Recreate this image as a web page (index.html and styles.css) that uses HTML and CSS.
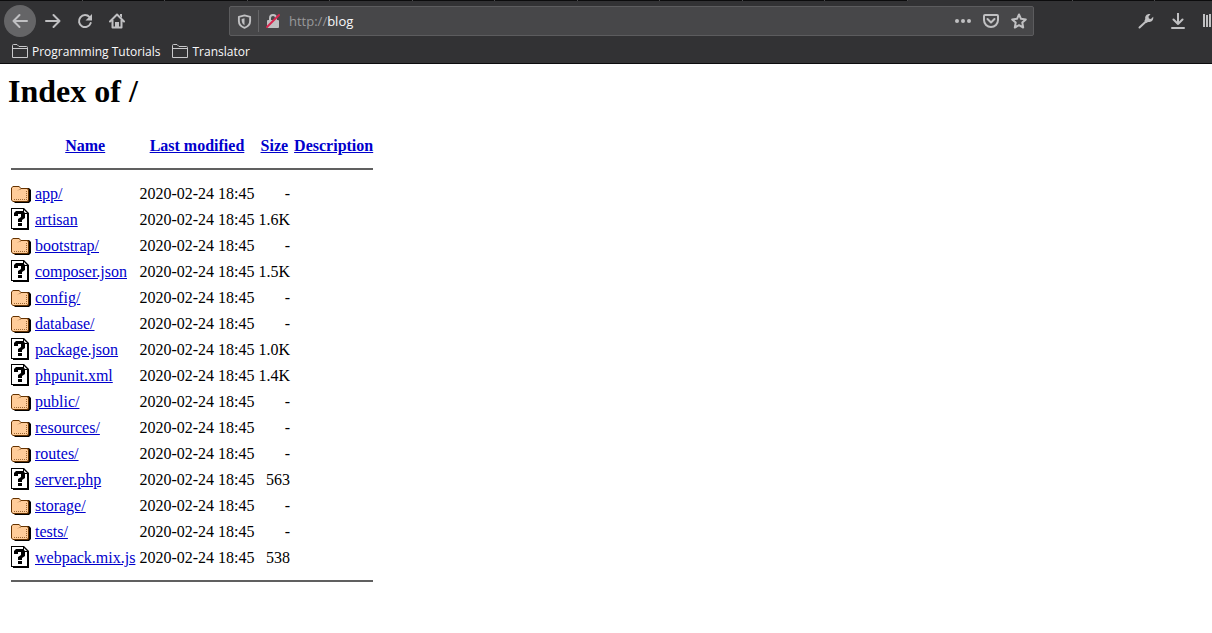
FILE: index.html
```html
<!DOCTYPE html>
<html lang="en">
<head>
    <meta charset="UTF-8">
    <meta name="viewport" content="width=device-width, initial-scale=1.0">
    <title>Index of /</title>
    <link rel="stylesheet" href="styles.css">
</head>
<body>
    <svg class="sprite" aria-hidden="true">
        <symbol id="folder" viewBox="0 0 20 22">
            <path fill="#000" d="M2 6h16l2 2v11l-2 2H4l-2-2z"/>
            <path fill="#663300" d="M2 4h6l2 2h7l1 1v12l-1 1H2l-2-2V6z"/>
            <path fill="#ffcc99" d="M2 5h6l2 2h6l1 1v10l-1 1H2l-1-1V6z"/>
            <path fill="none" stroke="#cc9966" d="M7 8.500l1-1h2"/>
            <path fill="none" stroke="#996633" stroke-dasharray="1 1" d="M3 17.500h13M15.500 9v8"/>
        </symbol>
        <symbol id="unknown" viewBox="0 0 20 22">
            <path fill="#000" d="M0 0h13l5 5v17H2v-1H0z"/>
            <path fill="#fff" d="M1 1h11v5h4v14H1z"/>
            <path fill="#fff" d="M13 2l3 3h-3z"/>
            <path fill="#000" d="M3 8V5l2-2h7l2 2v5l-3 2v2H7v-3l3-2V6H7v2zM7 15h4v3H7z"/>
        </symbol>
        <symbol id="bookmark-folder" viewBox="0 0 16 16">
            <path fill="none" stroke="#c8c8ca" d="M.5 14.500v-12q0-1 1-1h3.500l2 2h7.500q1 0 1 1v10zM.5 5.500h15"/>
        </symbol>
    </svg>

    <header class="browser">
        <div class="tab-edge"></div>
        <div class="toolbar">
            <button class="tool back" aria-label="Back">
                <svg viewBox="0 0 16 16"><path d="M15 8H1.500M7.500 2L1.500 8l6 6"/></svg>
            </button>
            <button class="tool" aria-label="Forward">
                <svg viewBox="0 0 16 16"><path d="M1 8h13.500M8.500 2l6 6-6 6"/></svg>
            </button>
            <button class="tool" aria-label="Reload">
                <svg viewBox="0 0 16 16"><path d="M12.600 4.200A6 6 0 1 0 13.700 10"/><path class="solid" d="M15 1v6.500H8.500z"/></svg>
            </button>
            <button class="tool" aria-label="Home">
                <svg viewBox="0 0 16 16"><path d="M1 8.500l7-7 7 7M3.500 7v7.500h9V7"/><path class="solid" d="M6 9h4v5H6zM11 1h2v4l-2-2z"/></svg>
            </button>

            <div class="urlbar">
                <button class="url-icon shield" aria-label="Tracking protection">
                    <svg viewBox="0 0 16 16"><path d="M8 1.500l6 1.500v4.500C14 11 11.500 13.500 8 14.800 4.500 13.500 2 11 2 7.500V3z"/><path class="solid" d="M8 4.500v7.500c-2-1.200-3-3-3-5V5.200z"/></svg>
                </button>
                <button class="url-icon" aria-label="Connection is not secure">
                    <svg viewBox="0 0 16 16"><path d="M5 8V5a3 3 0 0 1 6 0v3"/><path class="solid" d="M3 7h10a1 1 0 0 1 1 1v6a1 1 0 0 1-1 1H3a1 1 0 0 1-1-1V8a1 1 0 0 1 1-1z"/><path class="slash" d="M2 14L14 2"/></svg>
                </button>
                <label class="address">
                    <span>http://</span>
                    <input type="text" value="blog" aria-label="Address">
                </label>
                <button class="url-icon" aria-label="Page actions">
                    <svg viewBox="0 0 16 16"><circle class="solid" cx="2" cy="8" r="2"/><circle class="solid" cx="8" cy="8" r="2"/><circle class="solid" cx="14" cy="8" r="2"/></svg>
                </button>
                <button class="url-icon" aria-label="Save to Pocket">
                    <svg viewBox="0 0 16 16"><path d="M2 2h12a1 1 0 0 1 1 1v4a7 7 0 0 1-14 0V3a1 1 0 0 1 1-1zM4.500 6L8 9.500 11.500 6"/></svg>
                </button>
                <button class="url-icon" aria-label="Bookmark this page">
                    <svg viewBox="0 0 16 16"><path d="M8 1.500l2 4.300 4.800.6-3.500 3.200.9 4.900L8 12.200l-4.200 2.300.9-4.900L1.200 6.400 6 5.800z"/></svg>
                </button>
            </div>

            <div class="extras">
                <button class="tool" aria-label="Developer tools">
                    <svg viewBox="0 0 16 16"><path d="M1.500 14.500L8.500 8"/><path class="solid" d="M12.500 1.200L10.500 3.500l.4 2 2 .5 2.300-2.200C15.800 7 13.500 9.600 10 9L8.500 10 6.400 7.800 7.300 6C6.500 2.800 9.500.2 12.500 1.200z"/></svg>
                </button>
                <button class="tool" aria-label="Downloads">
                    <svg viewBox="0 0 16 16"><path d="M8 0v11M3.500 6.500L8 11l4.500-4.500M2 15h12"/></svg>
                </button>
                <button class="tool" aria-label="Library">
                    <svg viewBox="0 0 16 16"><path class="solid" d="M1 1h2v13H1zM4 2h2v12H4zM7 1h2v13H7zM10 2h2v12h-2z"/></svg>
                </button>
            </div>
        </div>
        <nav class="bookmarks">
            <a href="#"><svg><use href="#bookmark-folder"/></svg>Programming Tutorials</a>
            <a href="#"><svg><use href="#bookmark-folder"/></svg>Translator</a>
        </nav>
    </header>

    <main class="listing">
        <h1>Index of /</h1>
        <table>
            <thead>
                <tr>
                    <th class="icon"></th>
                    <th><a href="#">Name</a></th>
                    <th><a href="#">Last modified</a></th>
                    <th><a href="#">Size</a></th>
                    <th><a href="#">Description</a></th>
                </tr>
                <tr><th class="rule" colspan="5"><hr></th></tr>
            </thead>
            <tbody>
                <tr><td class="icon"><svg><use href="#folder"/></svg></td><td><a href="#">app/</a></td><td>2020-02-24 18:45</td><td class="size">-</td><td></td></tr>
                <tr><td class="icon"><svg><use href="#unknown"/></svg></td><td><a href="#">artisan</a></td><td>2020-02-24 18:45</td><td class="size">1.6K</td><td></td></tr>
                <tr><td class="icon"><svg><use href="#folder"/></svg></td><td><a href="#">bootstrap/</a></td><td>2020-02-24 18:45</td><td class="size">-</td><td></td></tr>
                <tr><td class="icon"><svg><use href="#unknown"/></svg></td><td><a href="#">composer.json</a></td><td>2020-02-24 18:45</td><td class="size">1.5K</td><td></td></tr>
                <tr><td class="icon"><svg><use href="#folder"/></svg></td><td><a href="#">config/</a></td><td>2020-02-24 18:45</td><td class="size">-</td><td></td></tr>
                <tr><td class="icon"><svg><use href="#folder"/></svg></td><td><a href="#">database/</a></td><td>2020-02-24 18:45</td><td class="size">-</td><td></td></tr>
                <tr><td class="icon"><svg><use href="#unknown"/></svg></td><td><a href="#">package.json</a></td><td>2020-02-24 18:45</td><td class="size">1.0K</td><td></td></tr>
                <tr><td class="icon"><svg><use href="#unknown"/></svg></td><td><a href="#">phpunit.xml</a></td><td>2020-02-24 18:45</td><td class="size">1.4K</td><td></td></tr>
                <tr><td class="icon"><svg><use href="#folder"/></svg></td><td><a href="#">public/</a></td><td>2020-02-24 18:45</td><td class="size">-</td><td></td></tr>
                <tr><td class="icon"><svg><use href="#folder"/></svg></td><td><a href="#">resources/</a></td><td>2020-02-24 18:45</td><td class="size">-</td><td></td></tr>
                <tr><td class="icon"><svg><use href="#folder"/></svg></td><td><a href="#">routes/</a></td><td>2020-02-24 18:45</td><td class="size">-</td><td></td></tr>
                <tr><td class="icon"><svg><use href="#unknown"/></svg></td><td><a href="#">server.php</a></td><td>2020-02-24 18:45</td><td class="size">563</td><td></td></tr>
                <tr><td class="icon"><svg><use href="#folder"/></svg></td><td><a href="#">storage/</a></td><td>2020-02-24 18:45</td><td class="size">-</td><td></td></tr>
                <tr><td class="icon"><svg><use href="#folder"/></svg></td><td><a href="#">tests/</a></td><td>2020-02-24 18:45</td><td class="size">-</td><td></td></tr>
                <tr><td class="icon"><svg><use href="#unknown"/></svg></td><td><a href="#">webpack.mix.js</a></td><td>2020-02-24 18:45</td><td class="size">538</td><td></td></tr>
            </tbody>
            <tfoot>
                <tr><td class="rule" colspan="5"><hr></td></tr>
            </tfoot>
        </table>
    </main>
</body>
</html>
```
FILE: styles.css
```css
:root {
    --chrome: #323234;
    --field: #474749;
    --icon: #c0c0c2;
    --link: #0000cc;
}

* {
    box-sizing: border-box;
}

body {
    margin: 0;
    background: white;
    color: black;
    font-family: "Liberation Serif", "Times New Roman", serif;
    font-size: 16px;
}

button {
    padding: 0;
    border: none;
    background: none;
}

svg {
    display: block;
}

.sprite {
    display: none;
}

/* browser bar */
.browser {
    background: var(--chrome);
    border-bottom: 1px solid #0c0c0d;
    font-family: "Open Sans", "Segoe UI", sans-serif;
}

.tab-edge {
    height: 1px;
    background:
        linear-gradient(var(--chrome), var(--chrome)) 908px 0 / 82px 1px no-repeat,
        repeating-linear-gradient(to right, #0c0c0d 0 82px, #4a4a4c 82px 83px, #0c0c0d 83px 164px, #4a4a4c 164px 165px);
}

.toolbar {
    display: flex;
    align-items: center;
    height: 40px;
    padding-left: 4px;
}

.tool {
    flex: none;
    display: grid;
    place-items: center;
    width: 32px;
    height: 32px;
}

.tool svg,
.url-icon svg {
    width: 16px;
    height: 16px;
    fill: none;
    stroke: var(--icon);
    stroke-width: 2;
    stroke-linejoin: round;
    stroke-linecap: round;
}

.browser .solid {
    fill: var(--icon);
    stroke: none;
}

.browser .slash {
    stroke: #d7264f;
}

.back {
    margin-right: 1px;
    border-radius: 50%;
    background: #656567;
}

.urlbar {
    flex: 1;
    display: flex;
    align-items: center;
    height: 30px;
    margin: 0 96px;
    border: 1px solid #5c5c5e;
    border-radius: 2px;
    background: var(--field);
}

.url-icon {
    flex: none;
    display: grid;
    place-items: center;
    width: 28px;
    height: 22px;
}

.shield {
    width: 29px;
    border-right: 1px solid #656567;
}

.shield svg {
    width: 15px;
    height: 15px;
}

.address {
    flex: 1;
    display: flex;
    align-items: center;
    min-width: 0;
    padding-left: 2px;
    color: #99999b;
    font-size: 13px;
}

.address input {
    flex: 1;
    min-width: 0;
    padding: 0;
    border: none;
    outline: none;
    background: none;
    color: #f9f9fa;
    font: inherit;
}

.extras {
    display: flex;
    width: 82px;
    overflow: hidden;
}

.bookmarks {
    display: flex;
    gap: 12px;
    height: 22px;
    padding: 0 12px;
}

.bookmarks a {
    display: flex;
    align-items: center;
    gap: 4px;
    height: 20px;
    color: #f9f9fa;
    font-size: 12px;
    text-decoration: none;
}

.bookmarks svg {
    width: 16px;
    height: 16px;
}

/* directory listing */
.listing {
    padding: 9px 8px 8px;
}

h1 {
    margin: 0 0 21px;
    font-size: 32px;
    line-height: 37px;
}

table {
    border-spacing: 2px;
}

th,
td {
    padding: 3px 1px 1px;
    line-height: 18px;
    white-space: nowrap;
}

.icon,
.rule {
    padding: 1px;
}

.icon {
    width: 22px;
    height: 24px;
}

.icon svg {
    width: 20px;
    height: 22px;
}

.size {
    text-align: right;
}

.listing a {
    color: var(--link);
}

hr {
    height: 2px;
    margin: 8px 0;
    border: none;
    background: #606060;
}
```
